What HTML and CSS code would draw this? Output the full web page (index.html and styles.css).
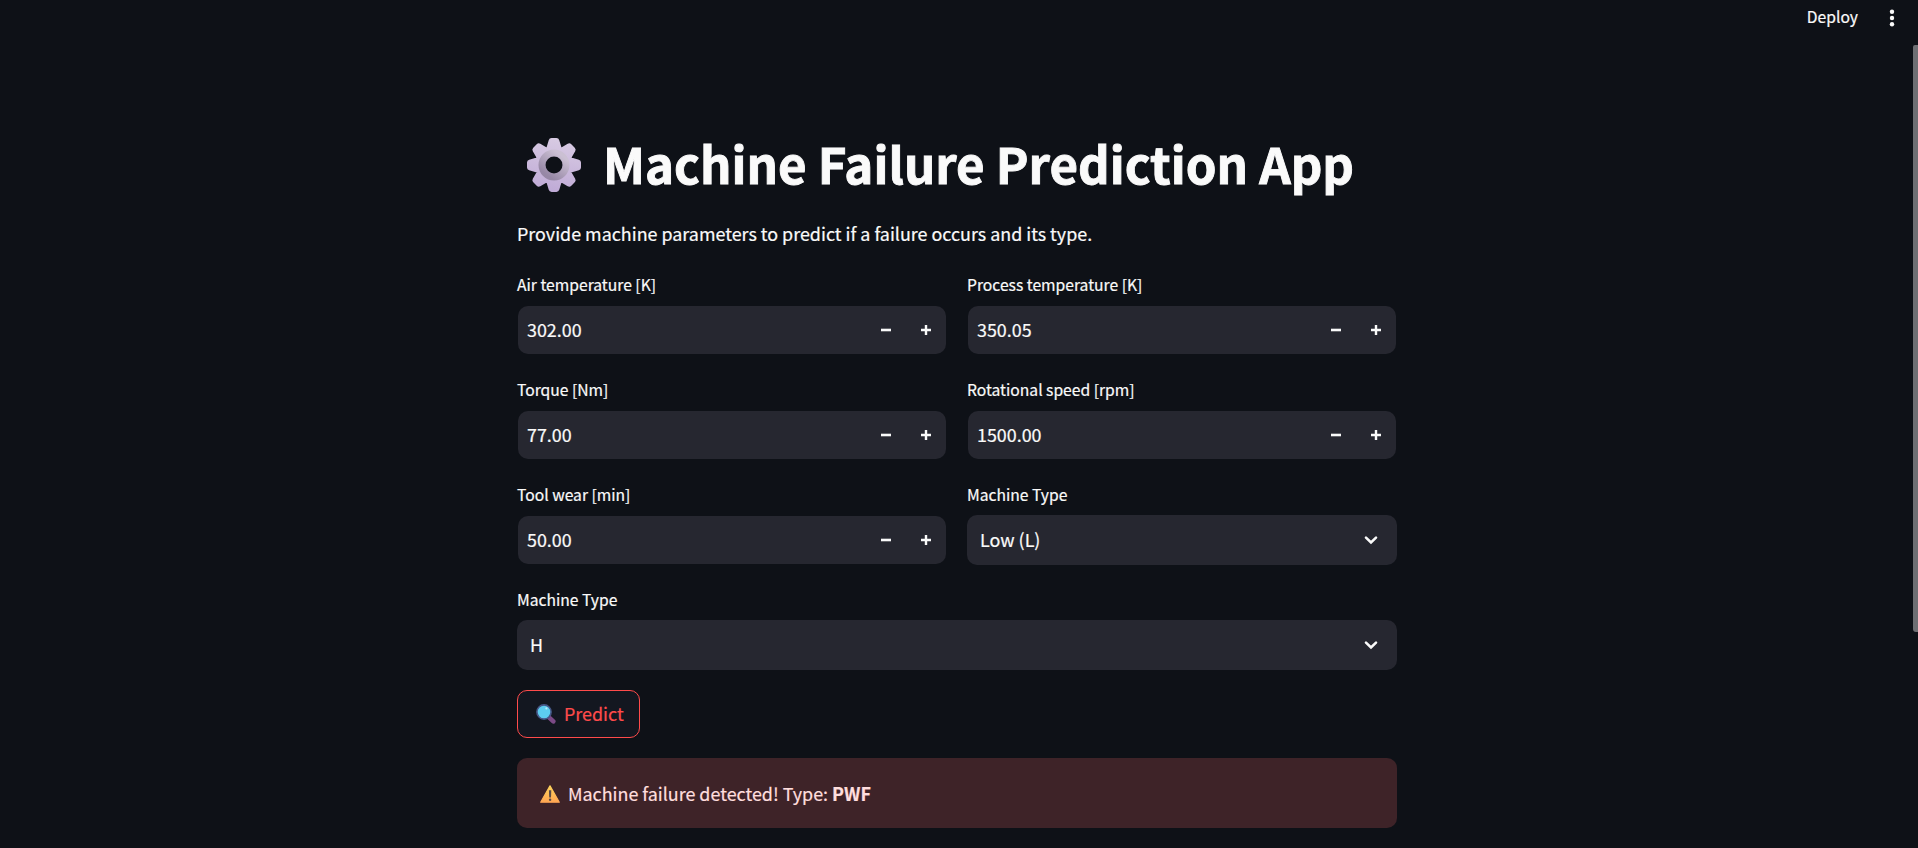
FILE: index.html
```html
<!DOCTYPE html>
<html lang="en">
<head>
<meta charset="utf-8">
<title>Machine Failure Prediction App</title>
<link rel="stylesheet" href="styles.css">
</head>
<body>
<svg class="defs" width="0" height="0" aria-hidden="true">
  <symbol id="minus" viewBox="0 0 10 10"><path d="M0 3.7h10v2.6H0z"/></symbol>
  <symbol id="plus" viewBox="0 0 10 10"><path d="M3.8 0h2.4v3.8H10v2.4H6.2V10H3.8V6.2H0V3.8h3.8z"/></symbol>
  <symbol id="chevron" viewBox="0 0 14 10"><path d="M2 2.6l5 4.8 5-4.8" fill="none" stroke="currentColor" stroke-width="2.6" stroke-linecap="round"/></symbol>
</svg>
<header class="toolbar">
  <button class="deploy">Deploy</button>
  <svg class="dots" viewBox="0 0 6 18"><circle cx="3" cy="2.7" r="2.2"/><circle cx="3" cy="9" r="2.2"/><circle cx="3" cy="15.3" r="2.2"/></svg>
</header>
<main class="content">
  <h1 class="title">
    <svg class="gear" viewBox="-27 -27 54 54">
      <defs>
        <linearGradient id="gearFill" gradientUnits="userSpaceOnUse" x1="5" y1="-27" x2="-5" y2="27"><stop offset="0" stop-color="#d8cbe3"/><stop offset="1" stop-color="#bfaad6"/></linearGradient>
        <linearGradient id="ringFill" x1="0.8" y1="0.1" x2="0.2" y2="0.9"><stop offset="0" stop-color="#cbc0d3"/><stop offset="1" stop-color="#9788a6"/></linearGradient>
      </defs>
      <path fill="url(#gearFill)" stroke="url(#gearFill)" stroke-width="6" stroke-linejoin="round" d="M-2.4-24H2.4L4.9-15.6L8-14.4L15.2-18.6L18.6-15.2L14.4-8L15.6-4.9L24-2.4V2.4L15.6 4.9L14.4 8L18.6 15.2L15.2 18.6L8 14.4L4.9 15.6L2.4 24H-2.4L-4.9 15.6L-8 14.4L-15.2 18.6L-18.6 15.2L-14.4 8L-15.6 4.9L-24 2.4V-2.4L-15.6-4.9L-14.4-8L-18.6-15.2L-15.2-18.6L-8-14.4L-4.9-15.6z"/>
      <circle r="12" fill="none" stroke="url(#ringFill)" stroke-width="7"/>
      <circle r="8.5" fill="#0e1117"/>
    </svg>
    <span class="title-text">Machine Failure Prediction App</span>
  </h1>
  <p class="intro">Provide machine parameters to predict if a failure occurs and its type.</p>
  <div class="fields">
    <div class="field"><label>Air temperature [K]</label>
      <div class="number"><span>302.00</span><svg class="step"><use href="#minus"/></svg><svg class="step"><use href="#plus"/></svg></div></div>
    <div class="field"><label>Process temperature [K]</label>
      <div class="number"><span>350.05</span><svg class="step"><use href="#minus"/></svg><svg class="step"><use href="#plus"/></svg></div></div>
    <div class="field"><label>Torque [Nm]</label>
      <div class="number"><span>77.00</span><svg class="step"><use href="#minus"/></svg><svg class="step"><use href="#plus"/></svg></div></div>
    <div class="field"><label>Rotational speed [rpm]</label>
      <div class="number"><span>1500.00</span><svg class="step"><use href="#minus"/></svg><svg class="step"><use href="#plus"/></svg></div></div>
    <div class="field"><label>Tool wear [min]</label>
      <div class="number"><span>50.00</span><svg class="step"><use href="#minus"/></svg><svg class="step"><use href="#plus"/></svg></div></div>
    <div class="field"><label>Machine Type</label>
      <div class="select"><span>Low (L)</span><svg class="chevron"><use href="#chevron"/></svg></div></div>
    <div class="field wide"><label>Machine Type</label>
      <div class="select"><span>H</span><svg class="chevron"><use href="#chevron"/></svg></div></div>
  </div>
  <button class="predict">
    <svg class="lens" viewBox="0 0 20 20">
      <path d="M13 13.4L17.3 17.4" stroke="#7c4a86" stroke-width="4.6" stroke-linecap="round"/>
      <path d="M11.3 11.7l2 2" stroke="#4d4b78" stroke-width="2.5"/>
      <circle cx="8" cy="8" r="7.1" fill="#5dcdf0" stroke="#465787" stroke-width="1.6"/>
      <circle cx="10.4" cy="4.4" r="1.1" fill="#b9ecfa"/>
    </svg>
    <span class="message">Predict</span>
  </button>
  <div class="alert">
    <svg class="warn" viewBox="0 0 20 18">
      <defs><linearGradient id="warnFill" x1="0" y1="0" x2="0" y2="1"><stop offset="0" stop-color="#ffd45c"/><stop offset="1" stop-color="#ffa552"/></linearGradient></defs>
      <path d="M10 .8L19.3 17.2H.7z" fill="url(#warnFill)" stroke="url(#warnFill)" stroke-width="1.2" stroke-linejoin="round"/>
      <path d="M8.9 5.3h2.4L11 12.4H9.2z" fill="#5a4a48"/><circle cx="10.1" cy="14.8" r="1.2" fill="#5a4a48"/>
    </svg>
    <span class="message">Machine failure detected! Type: <strong>PWF</strong></span>
  </div>
</main>
<div class="scroll-thumb"></div>
</body>
</html>
```
FILE: styles.css
```css
* { box-sizing: border-box; }
body {
  margin: 0;
  height: 848px;
  overflow: hidden;
  background: #0e1117;
  color: #fafafa;
  font-family: "Noto Sans CJK SC", "Noto Sans", sans-serif;
  font-size: 17.9px;
  -webkit-text-stroke: 0.2px currentColor;
}
.defs { display: block; position: absolute; }
svg { display: block; flex: none; fill: currentColor; }
button { font: inherit; color: inherit; background: none; border: 0; padding: 0; }
.toolbar { height: 35px; display: flex; justify-content: flex-end; align-items: center; gap: 31px; padding-right: 23px; }
.deploy { font-size: 15.67px; line-height: 24px; padding-bottom: 2px; }
.dots { width: 6px; height: 18px; }
.content { width: 880px; margin: 0 0 0 517px; padding-top: 97px; }
.title { display: flex; align-items: center; height: 66px; margin: 0; padding-left: 10px; gap: 22px; font-size: 49.2px; line-height: 66px; font-weight: 700; white-space: nowrap; }
.title-text { padding-bottom: 5px; line-height: 61px; -webkit-text-stroke: 0.9px currentColor; }
.gear { width: 54px; height: 54px; }
.intro { margin: 19px 0 21px; height: 32px; line-height: 32px; }
.fields { display: grid; grid-template-columns: 430px 430px; gap: 20px; }
.wide { grid-column: span 2; }
.field { display: flex; flex-direction: column; }
.field label { height: 30px; margin-bottom: 5px; line-height: 30px; font-size: 15.67px; }
.number, .select { display: flex; align-items: center; height: 50px; background: #262730; border-radius: 10px; }
.number { margin: 1px; height: 48px; padding: 0 15px 0 9px; gap: 30px; }
.number span, .select span { flex: 1; line-height: 30px; padding-bottom: 2px; }
.step { width: 10px; height: 10px; }
.select { padding: 0 19px 0 13px; }
.chevron { width: 14px; height: 10px; }
.predict { display: flex; align-items: center; gap: 8px; width: 123px; height: 48px; margin-top: 20px; padding-left: 18px; border: 1px solid #ff4b4b; border-radius: 10px; background: #131720; color: #ff4b4b; }
.lens { width: 20px; height: 20px; }
.alert { display: flex; align-items: center; gap: 8px; height: 70px; margin-top: 20px; padding: 2px 0 0 23px; border-radius: 10px; background: #3e2328; color: #ffdede; }
.warn { width: 20px; height: 18px; }
.message { line-height: 26px; padding-bottom: 3px; }
.scroll-thumb { position: absolute; right: 0; top: 45px; width: 5px; height: 587px; background: #6e6f73; border-radius: 2px 0 0 3px; }
```
